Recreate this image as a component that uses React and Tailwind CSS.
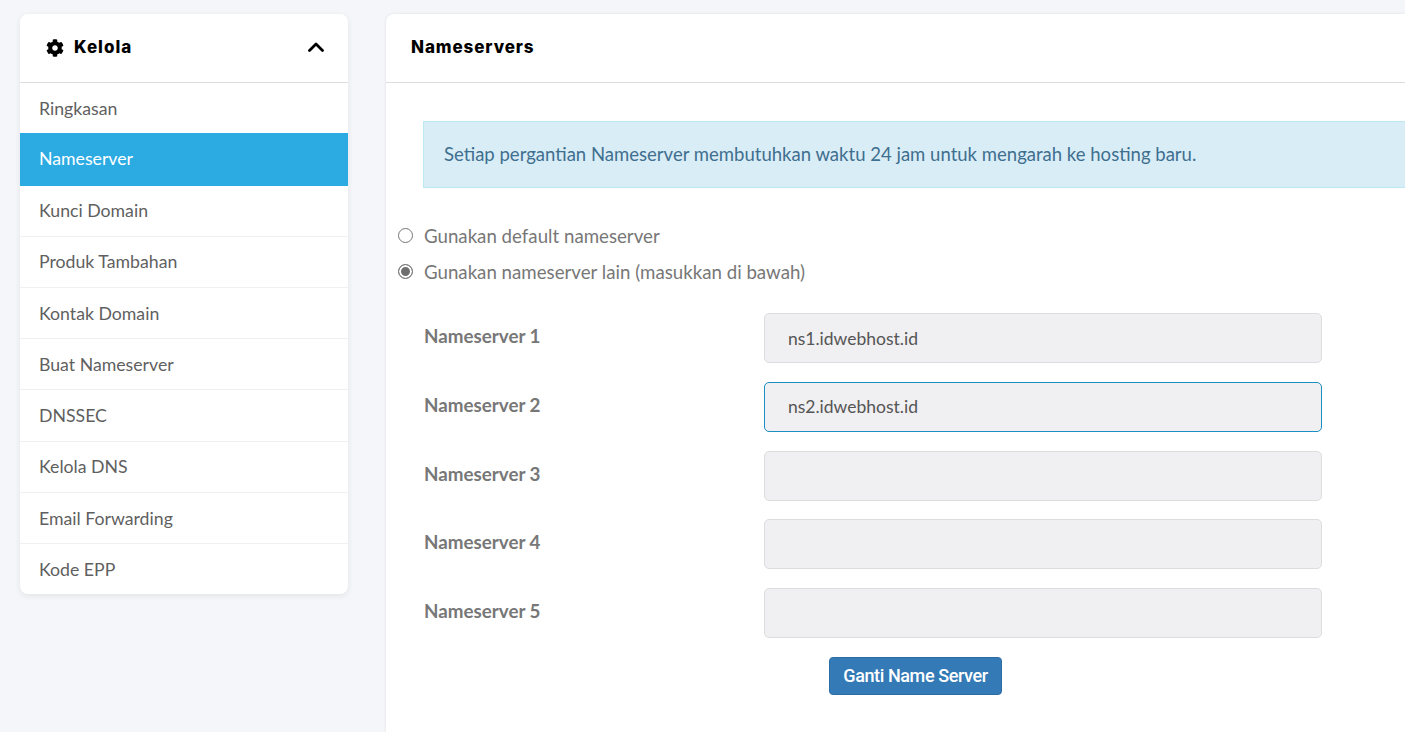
import { FaCog } from 'react-icons/fa';

const MENU = [
  { label: 'Ringkasan', h: 'h-[50px] pt-[3px]' },
  { label: 'Nameserver', h: 'h-[53px]', active: true },
  { label: 'Kunci Domain', h: 'h-[51px] pt-[1px]' },
  { label: 'Produk Tambahan', h: 'h-[51px] pt-[1px]' },
  { label: 'Kontak Domain', h: 'h-[51px] pt-[3px]' },
  { label: 'Buat Nameserver', h: 'h-[51px] pt-[3px]' },
  { label: 'DNSSEC', h: 'h-[52px] pt-[1px]' },
  { label: 'Kelola DNS', h: 'h-[51px] pt-[1px]' },
  { label: 'Email Forwarding', h: 'h-[51px] pt-[3px]' },
  { label: 'Kode EPP', h: 'h-[50px] pt-[3px]' },
];

const SERVERS = [
  { label: 'Nameserver 1', value: 'ns1.idwebhost.id' },
  { label: 'Nameserver 2', value: 'ns2.idwebhost.id', focus: true },
  { label: 'Nameserver 3', value: '' },
  { label: 'Nameserver 4', value: '' },
  { label: 'Nameserver 5', value: '' },
];

const Sidebar = () => (
  <aside className="w-[328px] shrink-0 self-start bg-white rounded-lg shadow-[0_2px_6px_rgba(0,0,0,0.08)] overflow-hidden">
    <div className="h-[69px] flex items-center justify-between pl-[26px] pr-[24px] border-b border-[#dddddd]">
      <div className="flex items-center gap-[10px] text-black">
        <FaCog className="text-[18px]" />
        <span className="font-['Inter',sans-serif] font-extrabold text-[17px] tracking-[1px]">Kelola</span>
      </div>
      <svg width="16" height="10" viewBox="0 0 16 10" fill="none" stroke="#000" strokeWidth="2.8" strokeLinecap="round" strokeLinejoin="round" className="mb-[2px]">
        <path d="M1.5 8.5 8 2l6.5 6.5" />
      </svg>
    </div>
    <ul>
      {MENU.map((item, i) => (
        <li
          key={item.label}
          className={`${item.h} flex items-center pl-[19px] text-[17.7px] ${
            item.active ? 'bg-[#2cabe3] text-white' : 'text-[#5f5f5f]'
          } ${!item.active && i > 1 && i < MENU.length - 1 ? 'border-b border-[#f0f0f0]' : ''}`}
        >
          {item.label}
        </li>
      ))}
    </ul>
  </aside>
);

const App = () => {
  return (
    <div className="h-[732px] overflow-hidden bg-[#f4f6f9] flex gap-[38px] pl-5 pt-[14px] font-['Lato',sans-serif]">
      <Sidebar />
      <main className="flex-1 bg-white shadow-[0_0_3px_rgba(0,0,0,0.1)] rounded-tl-lg">
        <div className="h-[69px] flex items-center pl-[25px] border-b border-[#dddddd]">
          <h2 className="font-['Inter',sans-serif] font-extrabold text-[17px] tracking-[0.9px] text-black">Nameservers</h2>
        </div>

        <div className="pt-[38px] pl-[12px]">
          <div className="ml-[25px] h-[67px] flex items-center pl-5 bg-[#d9edf7] border border-[#bce8f1] border-r-0 text-[#3f6f8f] text-[18.55px]">
            Setiap pergantian Nameserver membutuhkan waktu 24 jam untuk mengarah ke hosting baru.
          </div>

          <div className="mt-[37px] flex flex-col gap-[14px] text-[18.7px] text-[#777777]">
            <label className="h-[22px] flex items-center gap-[11px]">
              <input type="radio" name="ns" className="appearance-none w-[15px] h-[15px] mb-[2px] rounded-full border border-[#767676] bg-white" />
              Gunakan default nameserver
            </label>
            <label className="h-[22px] flex items-center gap-[11px]">
              <input
                type="radio"
                name="ns"
                defaultChecked
                className="appearance-none w-[15px] h-[15px] mb-[2px] rounded-full border border-[#767676] checked:bg-[#6f6f6f] checked:shadow-[inset_0_0_0_2px_#ffffff]"
              />
              Gunakan nameserver lain (masukkan di bawah)
            </label>
          </div>

          <div className="mt-[30px] pl-[26px]">
            {SERVERS.map((row) => (
              <div key={row.label} className="flex mb-[18.75px]">
                <label className="w-[340px] pt-[9px] font-bold text-[18.8px] text-[#777777]">{row.label}</label>
                <input
                  readOnly
                  value={row.value}
                  className={`w-[558px] h-[50px] px-[23px] rounded-[5px] bg-[#f0eff1] text-[17.5px] text-[#555555] outline-none border ${
                    row.focus ? 'border-[#1b8fc4]' : 'border-[#dddcdf]'
                  }`}
                />
              </div>
            ))}
            <div className="pl-[405px]">
              <button className="w-[173px] h-[38px] rounded bg-[#337ab7] border border-[#2e6da4] text-white text-[18px] font-medium font-['Roboto',sans-serif] tracking-[-0.4px]">
                Ganti Name Server
              </button>
            </div>
          </div>
        </div>
      </main>
    </div>
  );
};

export default App;
